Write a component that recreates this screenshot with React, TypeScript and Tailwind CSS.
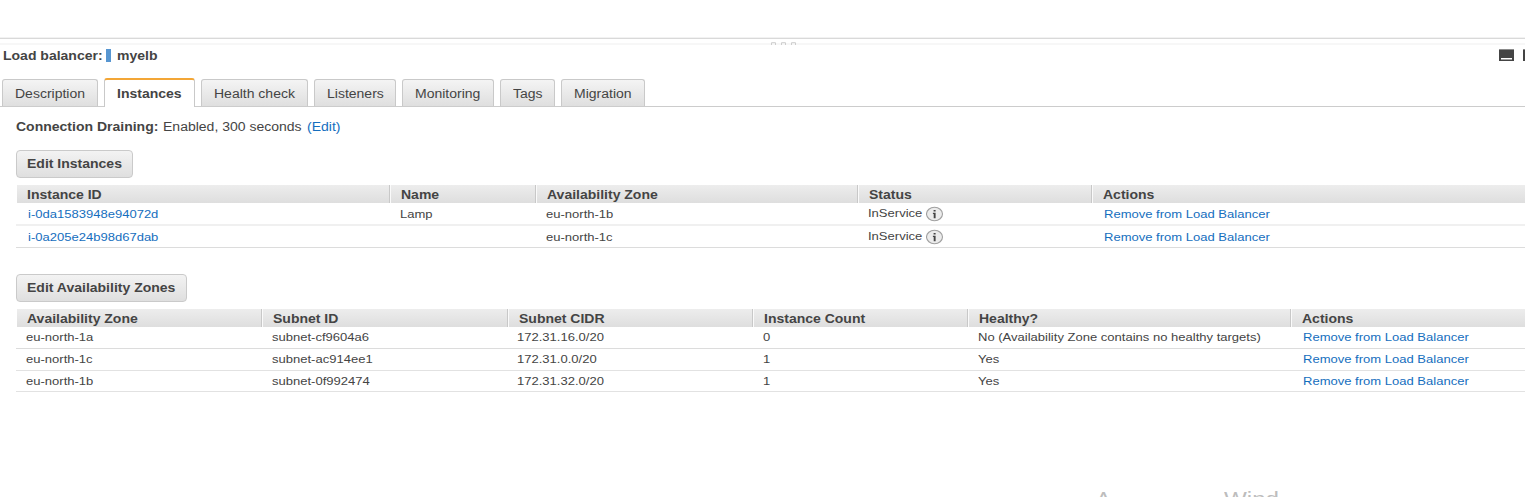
import type { ReactNode } from "react";
import clsx from "clsx";

function Wide({ children }: { children: ReactNode }) {
  return <span className="inline-block origin-left scale-x-[1.167] whitespace-nowrap">{children}</span>;
}

function Cell({ children }: { children: ReactNode }) {
  return <span className="inline-block origin-left scale-x-[1.184] whitespace-nowrap">{children}</span>;
}

const tabs = [
  { label: "Description", box: "w-[96px] mr-[6px]" },
  { label: "Instances", box: "w-[91px] mr-[6px]", active: true },
  { label: "Health check", box: "w-[107px] mr-[6px]" },
  { label: "Listeners", box: "w-[82px] mr-[6px]" },
  { label: "Monitoring", box: "w-[92px] mr-[6px]" },
  { label: "Tags", box: "w-[55px] mr-[6px]" },
  { label: "Migration", box: "w-[84px]" },
];

const instances = [
  { id: "i-0da1583948e94072d", name: "Lamp", zone: "eu-north-1b" },
  { id: "i-0a205e24b98d67dab", name: "", zone: "eu-north-1c" },
];

const zones = [
  { zone: "eu-north-1a", subnet: "subnet-cf9604a6", cidr: "172.31.16.0/20", count: "0", healthy: "No (Availability Zone contains no healthy targets)" },
  { zone: "eu-north-1c", subnet: "subnet-ac914ee1", cidr: "172.31.0.0/20", count: "1", healthy: "Yes" },
  { zone: "eu-north-1b", subnet: "subnet-0f992474", cidr: "172.31.32.0/20", count: "1", healthy: "Yes" },
];

function Header({ labels, cols }: { labels: string[]; cols: string }) {
  return (
    <div className={clsx("ml-px grid h-[18px] bg-linear-to-b from-[#ededed] to-[#dedede] text-[12px] leading-[20px] font-bold", cols)}>
      {labels.map((label, i) => (
        <div key={label} className={clsx("h-[18px]", i > 0 ? "border-l border-[#c8c8c8]" : "pl-[10px]")}>
          <div className={clsx("h-full", i > 0 && "border-l border-[#fafafa] pl-[10px]")}>
            <Wide>{label}</Wide>
          </div>
        </div>
      ))}
    </div>
  );
}

function GrayButton({ children, className }: { children: ReactNode; className: string }) {
  return (
    <button
      className={clsx(
        "block h-[28px] rounded-[4px] border border-[#cacaca] bg-linear-to-b from-[#f3f3f3] to-[#dfdfdf] pl-[10px] text-left text-[12px] leading-[26px] font-bold",
        className,
      )}
    >
      <Wide>{children}</Wide>
    </button>
  );
}

function InfoIcon() {
  return (
    <svg width="18" height="16" viewBox="0 0 18 16" className="shrink-0">
      <ellipse cx="8.5" cy="8" rx="8" ry="6.7" fill="#ececec" stroke="#a0a0a0" strokeWidth="1.1" />
      <path d="M7.6 3.9h2v1.7h-2zM6.9 6.8h2.7v5.4H7.7V7.9h-.8z" fill="#444" />
    </svg>
  );
}

const instanceCols = "grid-cols-[372px_146px_322px_234px_1fr]";
const zoneCols = "grid-cols-[245px_246px_246px_215px_323px_1fr]";
const zoneHeaderCols = "grid-cols-[244px_246px_245px_215px_323px_1fr]";

export default function App() {
  return (
    <div className="flex h-[497px] w-full flex-col overflow-hidden bg-white font-['Liberation_Sans',Arial,sans-serif] text-[#444]">
      <div className="h-[37px] shrink-0" />
      <div className="flex h-[8px] shrink-0 flex-col">
        <div className="h-px bg-[#f2f2f2]" />
        <div className="h-px bg-[#d9d9d9]" />
        <div className="flex h-[6px] items-end border-b-2 border-[#f7f7f7]">
          <svg width="28" height="3" viewBox="0 0 28 3" className="-mb-[2px] ml-[770px]" fill="none" stroke="#cdcdcd">
            <path d="M1.5 3V.7h4V3M11.5 3V.7h4V3M21.5 3V.7h4V3" />
          </svg>
        </div>
      </div>

      <header className="flex h-[34px] shrink-0 items-start text-[12px] leading-[22px] font-bold">
        <div className="w-[106px] pl-[3px]"><Wide>Load balancer:</Wide></div>
        <div className="mt-[4px] h-[13px] w-[5px] bg-[#5796d1]" />
        <div className="flex-1 pl-[6px]"><Wide>myelb</Wide></div>
        <svg width="26" height="12" viewBox="0 0 26 12" className="mt-[4px]">
          <path d="M0 0h15v12H0zM24 0h2v12h-2z" fill="#444" />
          <path d="M0 0h15v1H0zM24 0h2v1h-2z" fill="#8b8b8b" />
          <path d="M2 9h11v1.5H2z" fill="#fff" />
        </svg>
      </header>

      <nav className="flex h-[28px] shrink-0 items-end border-b border-[#cccccc] pl-[2px] text-[12px]">
        {tabs.map((tab) => (
          <div
            key={tab.label}
            className={clsx(
              "shrink-0 rounded-t-[3px] border border-b-0 border-[#c9c9c9] pl-[12px]",
              tab.box,
              tab.active
                ? "-mb-px h-[29px] border-t-2 border-t-[#f3a636] bg-white leading-[28px] font-bold"
                : "h-[27px] bg-linear-to-b from-[#f4f4f4] to-[#dfdfdf] leading-[28px]",
            )}
          >
            <Wide>{tab.label}</Wide>
          </div>
        ))}
      </nav>

      <main className="flex flex-col pl-[16px]">
        <div className="mt-[9px] flex h-[34px] text-[12px] leading-[22px]">
          <div className="w-[147px] font-bold"><Wide>Connection Draining:</Wide></div>
          <div className="w-[144px]"><Wide>Enabled, 300 seconds</Wide></div>
          <a className="text-[#146ebe]"><Wide>(Edit)</Wide></a>
        </div>

        <GrayButton className="w-[117px]">Edit Instances</GrayButton>
        <section className="mt-[7px]">
          <Header labels={["Instance ID", "Name", "Availability Zone", "Status", "Actions"]} cols={instanceCols} />
          {instances.map((row, i) => (
            <div
              key={row.id}
              className={clsx(
                "grid text-[11px] leading-[22px]",
                instanceCols,
                i === 0 ? "h-[23px] border-b-2 border-[#f0f0f0]" : "h-[22px] border-b border-[#dcdcdc]",
              )}
            >
              <a className="pl-[12px] text-[#146ebe]"><Cell>{row.id}</Cell></a>
              <div className="pl-[12px]"><Cell>{row.name}</Cell></div>
              <div className="pl-[12px]"><Cell>{row.zone}</Cell></div>
              <div className="flex items-start pl-[12px]">
                <div className="w-[57px] leading-[20px]"><Cell>InService</Cell></div>
                <div className="pt-[3px] pl-px"><InfoIcon /></div>
              </div>
              <a className="pl-[14px] text-[#146ebe]"><Cell>Remove from Load Balancer</Cell></a>
            </div>
          ))}
        </section>

        <GrayButton className="mt-[26px] w-[171px]">Edit Availability Zones</GrayButton>
        <section className="mt-[7px]">
          <Header
            labels={["Availability Zone", "Subnet ID", "Subnet CIDR", "Instance Count", "Healthy?", "Actions"]}
            cols={zoneHeaderCols}
          />
          {zones.map((row, i) => (
            <div
              key={row.zone}
              className={clsx(
                "grid border-b text-[11px] leading-[21px]",
                zoneCols,
                i === 0 ? "h-[22px] border-[#dcdcdc]" : i === 1 ? "h-[22px] border-[#e2e2e2]" : "h-[21px] border-[#e2e2e2]",
              )}
            >
              <div className="pl-[10px]"><Cell>{row.zone}</Cell></div>
              <div className="pl-[11px]"><Cell>{row.subnet}</Cell></div>
              <div className="pl-[10px]"><Cell>{row.cidr}</Cell></div>
              <div className="pl-[10px]"><Cell>{row.count}</Cell></div>
              <div className="pl-[10px]"><Cell>{row.healthy}</Cell></div>
              <a className="pl-[12px] text-[#146ebe]"><Cell>Remove from Load Balancer</Cell></a>
            </div>
          ))}
        </section>
      </main>

      <div className="mt-auto flex h-[7px] pl-[1096px] text-[21px] leading-[20px] text-[#bdbdbd]">
        <div className="-mt-px w-[128px]"><span className="inline-block origin-left scale-x-[1.06]">A</span></div>
        <div className="-mt-px"><span className="inline-block origin-left scale-x-[1.15]">Wind</span></div>
      </div>
    </div>
  );
}
